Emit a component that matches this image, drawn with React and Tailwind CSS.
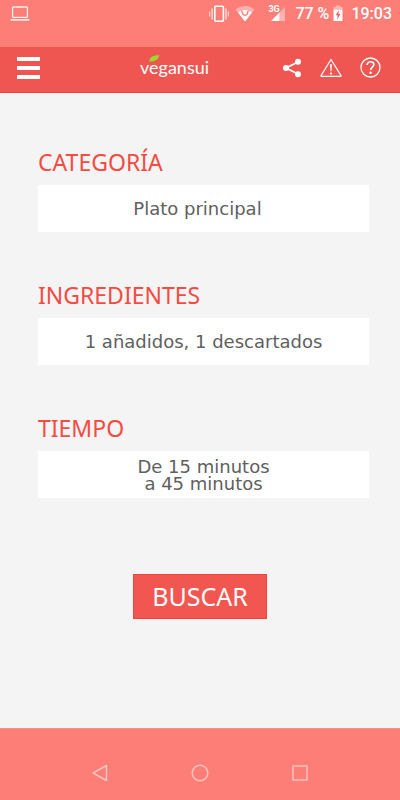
import clsx from 'clsx'

const FIELDS = [
  { id: 'categoria', label: 'CATEGORÍA', lines: ['Plato principal'], arrow: true },
  { id: 'ingredientes', label: 'INGREDIENTES', lines: ['1 añadidos, 1 descartados'] },
  { id: 'tiempo', label: 'TIEMPO', lines: ['De 15 minutos', 'a 45 minutos'] },
]

export default function App() {
  return (
    <div className="flex min-h-screen flex-col bg-[#f4f4f4] font-['Noto_Sans',sans-serif]">
      <StatusBar />
      <Header />
      <main className="flex flex-1 flex-col pt-14 pr-[31px] pl-[38px]">
        <div className="flex flex-col gap-[50px]">
          {FIELDS.map(f => <Field key={f.id} field={f} />)}
        </div>
        <div className="mt-[76px] flex justify-center pr-[7px]">
          <button type="submit" className="h-[45px] border border-[#f44336] bg-[#f15750] px-[18px] pb-px text-[25px] leading-6 text-white">
            BUSCAR
          </button>
        </div>
      </main>
      <NavBar />
    </div>
  )
}

function Field({ field }) {
  return (
    <section className="flex flex-col gap-2.5">
      <h2 id={field.id} className="text-[23px] leading-[26px] text-[#f44b42]">{field.label}</h2>
      <button
        type="button"
        aria-describedby={field.id}
        className={clsx(
          "flex h-[47px] w-full flex-col items-center justify-center bg-white font-['DejaVu_Sans',sans-serif] text-[18px] leading-[17px] text-[#606060]",
          field.arrow && 'pr-3'
        )}
      >
        {field.lines.map(l => <span key={l}>{l}</span>)}
      </button>
    </section>
  )
}

function StatusBar() {
  return (
    <div className="flex h-[47px] items-start justify-between bg-[#fd7d77] pt-1 pr-2 pl-[10px] font-[Roboto,sans-serif] text-white">
      {/* Laptop */}
      <svg width="20" height="20" viewBox="0 0 20 20" fill="none" stroke="currentColor" className="opacity-90">
        <rect x="2.6" y="3" width="14.8" height="10.4" rx="1" strokeWidth="1.3" />
        <path d="M0.5 15.9h19" strokeWidth="1.6" />
      </svg>

      <div className="flex h-5 items-center">
        {/* Vibrate */}
        <svg width="20" height="20" viewBox="0 0 20 20" fill="none" stroke="currentColor">
          <rect x="5.8" y="2.2" width="8.6" height="15" rx="1" strokeWidth="1.6" />
          <path d="M3.2 4.5v11M17 4.5v11" strokeWidth="1.6" opacity=".65" />
          <path d="M0.7 7.5v5M19.4 7.5v5" strokeWidth="1.2" opacity=".65" />
        </svg>
        {/* Wifi */}
        <svg width="20" height="20" viewBox="0 0 20 20" className="ml-[6px]" fill="currentColor">
          <path d="M0.5 5.5C6 .7 14 .7 19.5 5.5L10 17.5z" opacity=".4" />
          <path d="M3 8.5C7 5 13 5 17 8.5L10 17.5z" />
          <path d="M6.5 6.5L8 10M13.5 6.5L12 10M7 9.5l3 2.2 3-2.2" stroke="#fd7d77" strokeWidth="1.3" fill="none" />
        </svg>
        {/* Mobile signal */}
        <span className="relative ml-[13px] block h-5 w-5">
          <svg width="20" height="20" viewBox="0 0 20 20" fill="currentColor">
            <path d="M11.5 8.5L17 3v14h-5.5z" opacity=".4" />
            <path d="M3 17l8.5-8.5V17z" />
          </svg>
          <span className="absolute top-px left-0 text-[9px] leading-[9px] font-bold">3G</span>
        </span>
        <span className="ml-[7px] text-base leading-5 font-medium">77 %</span>
        {/* Battery */}
        <svg width="10" height="20" viewBox="0 0 10 20" className="ml-1" fill="currentColor">
          <path d="M2.8 1.5h4.4V3h2.3v2.5h-9V3h2.3z" opacity=".45" />
          <path d="M.5 5.5h9V17h-9z" />
          <path d="M6 6L2.8 11.2h2l-.6 4.3 3.2-5.4h-2z" fill="#f15750" />
        </svg>
        <span className="ml-2 text-base leading-5 font-medium">19:03</span>
      </div>
    </div>
  )
}

function Header() {
  return (
    <header className="relative flex h-[46px] items-center justify-between border-b border-[#f04540] bg-[#ef5651] pr-[19px] pb-1 pl-[17px] text-white">
      <button type="button" aria-label="Menú">
        <svg width="23" height="24" viewBox="0 0 23 24" fill="currentColor">
          <path d="M0 1h23v4H0zM0 10h23v4H0zM0 19h23v4H0z" />
        </svg>
      </button>

      <Logo />

      <div className="flex items-center gap-[18px]">
        <button type="button" aria-label="Compartir">
          <svg width="20" height="20" viewBox="0 0 20 20" fill="currentColor">
            <path d="M16 4L4 10l12 6" fill="none" stroke="currentColor" strokeWidth="1.9" />
            <circle cx="16" cy="3.7" r="3" />
            <circle cx="4" cy="10" r="3" />
            <circle cx="16" cy="16.3" r="3" />
          </svg>
        </button>
        <button type="button" aria-label="Avisos">
          <svg width="22" height="20" viewBox="0 0 22 20" fill="none" stroke="currentColor" strokeWidth="1.2">
            <path d="M11 1.5L21 17.6q.3.8-.6.8H1.6q-.9 0-.6-.8z" strokeLinejoin="round" />
            <path d="M10.1 6.2h1.8l-.4 7h-1z" fill="currentColor" stroke="none" />
            <circle cx="11" cy="15.6" r="1.1" fill="currentColor" stroke="none" />
          </svg>
        </button>
        <button type="button" aria-label="Ayuda">
          <svg width="21" height="21" viewBox="0 0 21 21" fill="none" stroke="currentColor">
            <circle cx="10.5" cy="10.5" r="9.5" strokeWidth="1.3" />
            <path d="M7.2 8c0-4.500 6.800-4.200 6.600-.3-.1 2.300-3.200 2.600-3.200 5.300" strokeWidth="1.6" />
            <circle cx="10.6" cy="15.7" r="1.2" fill="currentColor" stroke="none" />
          </svg>
        </button>
      </div>
    </header>
  )
}

function Logo() {
  return (
    <a href="#" aria-label="vegansui" className="absolute top-2 left-[35%] block font-[Lato,sans-serif] text-lg leading-6">
      vegansui
      <svg width="11" height="7" viewBox="0 0 11 7" className="absolute top-0 left-[9px]">
        <path d="M.3 6.5C.3 2 4 .3 10.5.3 9 4.5 6.5 7 .3 6.5z" fill="#9bd72f" />
      </svg>
    </a>
  )
}

function NavBar() {
  return (
    <nav className="flex h-[72px] items-end justify-center gap-20 border-t border-[#f5908b] bg-[#fd7d77] pb-[17px] text-[#fec4c1]">
      <button type="button" aria-label="Atrás">
        <svg width="20" height="20" viewBox="0 0 20 20" fill="none" stroke="currentColor" strokeWidth="1.5">
          <path d="M16.5 2.5v15L3 10z" strokeLinejoin="round" />
        </svg>
      </button>
      <button type="button" aria-label="Inicio">
        <svg width="20" height="20" viewBox="0 0 20 20" fill="none" stroke="currentColor" strokeWidth="1.5">
          <circle cx="10" cy="10" r="7.8" />
        </svg>
      </button>
      <button type="button" aria-label="Recientes">
        <svg width="20" height="20" viewBox="0 0 20 20" fill="none" stroke="currentColor" strokeWidth="1.5">
          <rect x="3" y="3" width="14" height="14" rx=".5" />
        </svg>
      </button>
    </nav>
  )
}
